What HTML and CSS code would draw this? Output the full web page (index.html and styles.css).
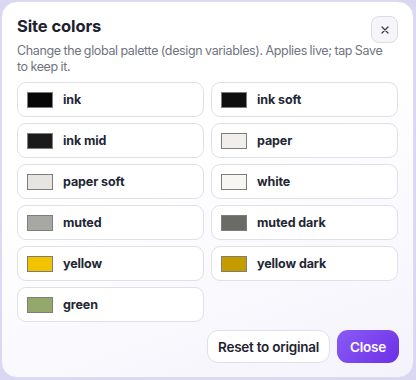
FILE: index.html
```html
<!DOCTYPE html>
<html>
<head>
<meta charset="utf-8">
<link rel="stylesheet" href="styles.css">
</head>
<body>
<div class="dialog">
  <div class="head">
    <h1 class="title">Site colors</h1>
    <button class="x" aria-label="Close">
      <svg width="10" height="10" viewBox="0 0 10 10"><path d="M2 2L8 8M8 2L2 8" stroke="#3a3d4a" stroke-width="1.3" stroke-linecap="round"/></svg>
    </button>
  </div>
  <p class="sub">Change the global palette (design variables). Applies live; tap Save to keep it.</p>
  <div class="grid">
    <div class="card"><span class="sw" style="background:#060606"></span><span class="lab">ink</span></div>
    <div class="card"><span class="sw" style="background:#0f0f0f"></span><span class="lab">ink soft</span></div>
    <div class="card"><span class="sw" style="background:#1b1b1b"></span><span class="lab">ink mid</span></div>
    <div class="card"><span class="sw" style="background:#f0efeb"></span><span class="lab">paper</span></div>
    <div class="card"><span class="sw" style="background:#e6e5e1"></span><span class="lab">paper soft</span></div>
    <div class="card"><span class="sw" style="background:#f7f6f3"></span><span class="lab">white</span></div>
    <div class="card"><span class="sw" style="background:#a7a7a3"></span><span class="lab">muted</span></div>
    <div class="card"><span class="sw" style="background:#6a6a66"></span><span class="lab">muted dark</span></div>
    <div class="card"><span class="sw" style="background:#f1c300"></span><span class="lab">yellow</span></div>
    <div class="card"><span class="sw" style="background:#c49c00"></span><span class="lab">yellow dark</span></div>
    <div class="card"><span class="sw" style="background:#93a96b"></span><span class="lab">green</span></div>
  </div>
  <div class="foot">
    <button class="btn reset">Reset to original</button>
    <button class="btn close">Close</button>
  </div>
</div>
</body>
</html>
```
FILE: styles.css
```css
html, body {
  margin: 0;
  padding: 0;
  width: 416px;
  height: 380px;
  background: #d9d7f1;
  overflow: hidden;
}
body {
  font-family: Inter, "Noto Sans", sans-serif;
  color: #1f2330;
}
.dialog {
  box-sizing: border-box;
  margin: 1px 2px 0 1px;
  width: 413px;
  height: 377px;
  background: linear-gradient(160deg, #ffffff 40%, #f4f3fc 100%);
  border: 1px solid #dedcf2;
  border-radius: 16px;
  padding: 13px 15px 0 15px;
  display: flex;
  flex-direction: column;
}
.head {
  display: flex;
  justify-content: space-between;
  align-items: flex-start;
  height: 24px;
}
.title {
  margin: 0;
  font-size: 16.5px;
  font-weight: 700;
  color: #1d2130;
  letter-spacing: -0.1px;
  line-height: 22px;
}
.sub {
  margin: 4px 0 0 0;
  width: 378px;
  font-size: 12.5px;
  line-height: 16px;
  color: #707480;
  letter-spacing: -0.35px;
  word-spacing: -0.5px;
}
.x {
  flex: none;
  width: 27px;
  height: 27px;
  margin-right: 0px;
  border: 1px solid #dcdce6;
  border-radius: 8px;
  background: #f6f6fa;
  display: flex;
  align-items: center;
  justify-content: center;
  padding: 0;
  position: relative;
  top: 1px;
}
.grid {
  margin-top: 7px;
  display: grid;
  grid-template-columns: 187px 187px;
  column-gap: 7px;
  row-gap: 6px;
}
.card {
  box-sizing: border-box;
  height: 35px;
  border: 1px solid #e0e0e8;
  border-radius: 9px;
  background: #fff;
  display: flex;
  align-items: center;
  padding-left: 9px;
  gap: 10px;
}
.sw {
  box-sizing: border-box;
  width: 26px;
  height: 16px;
  border: 1px solid #7d7d7d;
  flex: none;
}
.lab {
  font-size: 12.5px;
  font-weight: 700;
  color: #232734;
  letter-spacing: -0.1px;
}
.foot {
  margin-top: 8px;
  display: flex;
  justify-content: flex-end;
  gap: 7px;
  margin-right: -1px;
}
.btn {
  font-family: Inter, "Noto Sans", sans-serif;
  height: 33px;
  border-radius: 11px;
  font-size: 13.5px;
  font-weight: 600;
  padding: 0 10px;
  letter-spacing: -0.25px;
}
.reset {
  background: #fff;
  border: 1px solid #e0e0e8;
  color: #1f2330;
}
.close {
  background: linear-gradient(135deg, #8a5cf6 0%, #6d2fe6 100%);
  border: none;
  color: #fff;
  width: 62px;
  padding: 0;
}
```
